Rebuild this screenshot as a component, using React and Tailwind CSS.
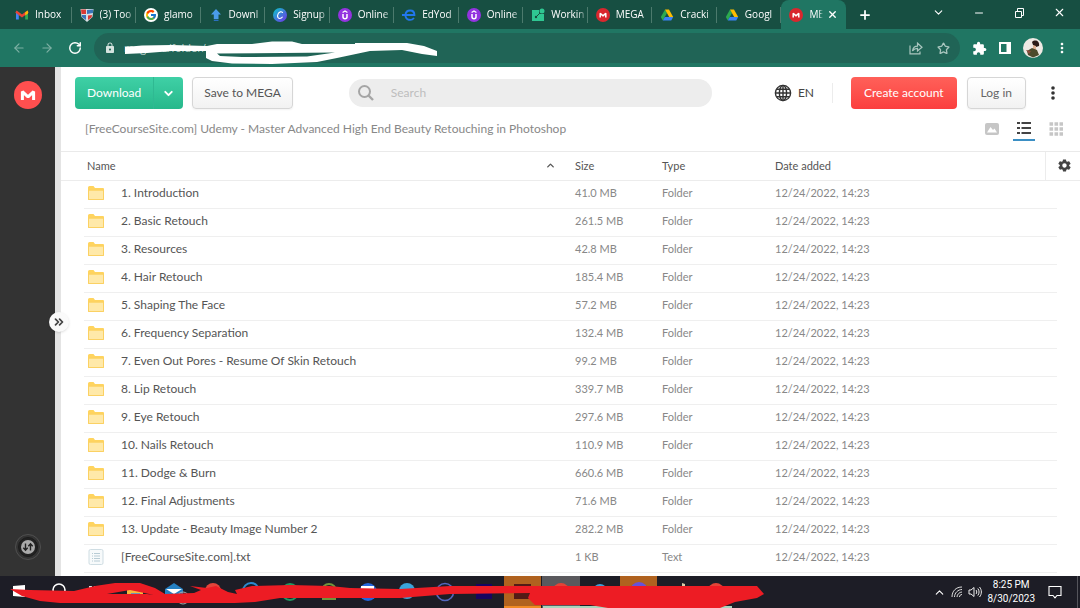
import { FcGoogle } from "react-icons/fc";
import { IoMdSettings } from "react-icons/io";
import { MdExtension, MdLock, MdMoreVert } from "react-icons/md";
import { ArrowLeft, ArrowRight, ChevronDown, ChevronUp, ChevronsRight, Minus, Plus, RotateCw, Star, X } from "lucide-react";

const tabs = [
    { title: "Inbox", icon: "gmail" },
    { title: "(3) Too", icon: "shield" },
    { title: "glamo", icon: "google" },
    { title: "Downl", icon: "arrow" },
    { title: "Signup", icon: "canva" },
    { title: "Online", icon: "udemy" },
    { title: "EdYod", icon: "edyoda" },
    { title: "Online", icon: "udemy" },
    { title: "Workin", icon: "sheet" },
    { title: "MEGA", icon: "mega" },
    { title: "Cracki", icon: "drive" },
    { title: "Googl", icon: "drive" },
    { title: "ME", icon: "mega", active: true },
];

const files = [
    ["1. Introduction", "41.0 MB"],
    ["2. Basic Retouch", "261.5 MB"],
    ["3. Resources", "42.8 MB"],
    ["4. Hair Retouch", "185.4 MB"],
    ["5. Shaping The Face", "57.2 MB"],
    ["6. Frequency Separation", "132.4 MB"],
    ["7. Even Out Pores - Resume Of Skin Retouch", "99.2 MB"],
    ["8. Lip Retouch", "339.7 MB"],
    ["9. Eye Retouch", "297.6 MB"],
    ["10. Nails Retouch", "110.9 MB"],
    ["11. Dodge & Burn", "660.6 MB"],
    ["12. Final Adjustments", "71.6 MB"],
    ["13. Update - Beauty Image Number 2", "282.2 MB"],
    ["[FreeCourseSite.com].txt", "1 KB", "Text"],
];

function MegaLogo({ className, fill = "#d9272e" }) {
    return (
        <svg viewBox="0 0 28 28" className={className}>
            <circle cx="14" cy="14" r="14" fill={fill} />
            <path d="M8.4 19V10.6L14 15.8L19.6 10.6V19" fill="none" stroke="#fff" strokeWidth="3" strokeLinejoin="bevel" />
        </svg>
    );
}

function DriveIcon() {
    return (
        <svg viewBox="0 0 14 14" className="size-3.5">
            <path d="M5 1.5L0.8 9L2.8 12.5L7 5Z" fill="#2da94f" />
            <path d="M5 1.5H9L13.2 9H9.2Z" fill="#fdbd00" />
            <path d="M4.8 9H13.2L11.2 12.5H2.8Z" fill="#3b82f6" />
        </svg>
    );
}

function Favicon({ name }) {
    if (name === "gmail") {
        return (
            <svg viewBox="0 0 14 14" className="size-3.5">
                <path d="M1 3V11.5H3.8V6Z" fill="#4285f4" />
                <path d="M13 3V11.5H10.2V6Z" fill="#34a853" />
                <path d="M1 3.5L7 8L13 3.5" fill="none" stroke="#ea4335" strokeWidth="2.4" />
                <path d="M10.2 4.2L13 2.4V5.6L10.2 7.4Z" fill="#fbbc04" />
            </svg>
        );
    }
    if (name === "shield") {
        return (
            <svg viewBox="0 0 14 14" className="size-3.5">
                <path d="M0.5 1H13.5L12.5 9L7 14L1.5 9Z" fill="#d8dde3" />
                <path d="M1 1.5H6V6H1.5Z" fill="#d83a34" />
                <path d="M7 2L13 1.5V5L7 6Z" fill="#3a76b9" />
                <path d="M2 7L6 7V12L2 9Z" fill="#3a76b9" />
                <path d="M8 7.5L12 7L11.5 9.5L8 12Z" fill="#d83a34" />
            </svg>
        );
    }
    if (name === "google") {
        return (
            <span className="flex size-3.5 items-center justify-center rounded-full bg-white">
                <FcGoogle size={12} />
            </span>
        );
    }
    if (name === "arrow") {
        return (
            <svg viewBox="0 0 14 14" className="size-3.5">
                <path d="M7 1L12 6.5H9.5V11H4.8V6.5H2Z" fill="#4a9bea" />
                <path d="M4.8 11.6H9.5V13H4.8Z" fill="#2b6fc0" />
            </svg>
        );
    }
    if (name === "canva") {
        return (
            <svg viewBox="0 0 14 14" className="size-3.5">
                <defs>
                    <linearGradient id="canva" x1="0" y1="0" x2="1" y2="1">
                        <stop offset="0.1" stopColor="#12bccb" />
                        <stop offset="0.9" stopColor="#6a3de8" />
                    </linearGradient>
                </defs>
                <circle cx="7" cy="7" r="7" fill="url(#canva)" />
                <path d="M9.6 5C9.4 2.8 5.2 3.4 4.6 7.4C4.2 11.4 8 11 9.6 8.8" fill="none" stroke="#fff" strokeWidth="1.1" />
            </svg>
        );
    }
    if (name === "udemy") {
        return (
            <svg viewBox="0 0 14 14" className="size-3.5">
                <circle cx="7" cy="7" r="7" fill="#9333e0" />
                <path d="M4.6 4.6L7 3L9.4 4.6" fill="none" stroke="#fff" strokeWidth="1.2" />
                <path d="M5 6V9C5 11.3 9 11.3 9 9V6" fill="none" stroke="#fff" strokeWidth="1.5" />
            </svg>
        );
    }
    if (name === "edyoda") {
        return (
            <svg viewBox="0 0 14 14" className="size-3.5">
                <path d="M0 7H12.4C12.4 1 4 1 3.4 7C3.6 12.8 9.6 12.8 12 10" fill="none" stroke="#2277ee" strokeWidth="1.9" />
            </svg>
        );
    }
    if (name === "sheet") {
        return (
            <svg viewBox="0 0 14 14" className="size-3.5">
                <path d="M1 2H8V6H13V13H1Z" fill="#2fc792" />
                <path d="M4 10L12 2" stroke="#17503f" strokeWidth="1" />
                <circle cx="11" cy="3" r="2.5" fill="#2fc792" />
                <circle cx="5" cy="9" r="1.2" fill="#17503f" />
            </svg>
        );
    }
    if (name === "mega") return <MegaLogo className="size-3.5" />;
    return <DriveIcon />;
}

function Tab({ tab }) {
    return (
        <div
            className={
                tab.active
                    ? "flex h-full min-w-0 flex-1 items-center rounded-t-lg bg-[#207663] pl-2"
                    : "relative flex h-full min-w-0 flex-1 items-center pl-2 after:absolute after:right-0 after:h-4 after:w-px after:bg-[#4c7a6d]"
            }
        >
            <span className="shrink-0"><Favicon name={tab.icon} /></span>
            <span className="ml-1.5 min-w-0 flex-1 mask-r-from-70% whitespace-nowrap">{tab.title}</span>
            {tab.active && <button aria-label="Close tab" className="mr-2 ml-1"><X size={11} strokeWidth={3} /></button>}
        </div>
    );
}

function BrowserBar() {
    return (
        <header className="text-white">
            <div className="flex h-[29px] items-center bg-[#174f42] pl-[7px] font-['Open_Sans',sans-serif] text-[10px]">
                <div className="flex h-full min-w-0 flex-1">
                    {tabs.map((tab, i) => <Tab key={i} tab={tab} />)}
                </div>
                <div className="flex w-[234px] items-center justify-between pr-3.5 pl-3">
                    <button aria-label="New tab"><Plus size={14} strokeWidth={3} /></button>
                    <div className="flex items-center gap-[28px] pb-1">
                        <button aria-label="Search tabs"><ChevronDown size={13} strokeWidth={2} /></button>
                        <button aria-label="Minimize"><Minus size={12} strokeWidth={2} /></button>
                        <button aria-label="Restore">
                            <svg viewBox="0 0 12 12" className="size-3" fill="none" stroke="currentColor">
                                <path d="M2.5 4.5H8.5V10.5H2.5ZM4.5 4V1.5H10.5V8.5H9" />
                            </svg>
                        </button>
                        <button aria-label="Close"><X size={13} strokeWidth={2} /></button>
                    </div>
                </div>
            </div>
            <div className="flex h-[38px] items-center bg-[#207663] pr-2.5 pl-3">
                <div className="flex items-center gap-3.5">
                    <button aria-label="Back" className="text-[#7db0a4]"><ArrowLeft size={14} /></button>
                    <button aria-label="Forward" className="text-[#7db0a4]"><ArrowRight size={14} /></button>
                    <button aria-label="Reload"><RotateCw size={14} strokeWidth={2.5} /></button>
                </div>
                <div className="relative ml-3 flex h-[30px] flex-1 items-center rounded-full bg-[#206456] px-2.5">
                    <MdLock size={12} className="text-[#d5e3df]" />
                    <input
                        aria-label="Address"
                        className="ml-2 min-w-0 flex-1 bg-transparent font-['Open_Sans',sans-serif] text-[11px] text-[#b9d0ca] outline-none"
                        defaultValue="mega.nz/folder/"
                    />
                    <div className="flex items-center gap-3.5 text-[#a9c6bf]">
                        <button aria-label="Share">
                            <svg viewBox="0 0 14 14" className="size-3.5" fill="none" stroke="currentColor" strokeWidth="1.2">
                                <path d="M1 4.5V12.8H11V10.5M3.5 10C4 6.5 6 5.2 8.5 5.2V2.2L13 6.2L8.5 10V7.4C6.5 7.4 5 8 3.5 10Z" />
                            </svg>
                        </button>
                        <button aria-label="Bookmark"><Star size={13} strokeWidth={2.4} /></button>
                    </div>
                    <svg viewBox="0 0 320 28" className="pointer-events-none absolute top-1 left-7 h-7 w-80" fill="#fff">
                        <path d="M3 10L20 8.5L50 8L85 9L95 7L130 7L150 4.5L170 4.5L180 7L233 7V6L285 6L302 9L315 14V19L300 17L280 13L248 14L215 21L195 25L150 27L110 26.5L90 24L84 21V14L50 14L25 16L3 17ZM95 16.5L98 19L120 20L185 19.5L213 15.5Z" fillRule="evenodd" />
                    </svg>
                </div>
                <div className="ml-3 flex items-center gap-[11px]">
                    <button aria-label="Extensions"><MdExtension size={15} /></button>
                    <button aria-label="Side panel">
                        <svg viewBox="0 0 14 14" className="size-3.5"><path d="M1 1H13V13H1ZM3 3V11H8.5V3Z" fill="#fff" fillRule="evenodd" /></svg>
                    </button>
                    <button aria-label="Profile">
                        <svg viewBox="0 0 20 20" className="size-5">
                            <circle cx="10" cy="10" r="10" fill="#efe9e4" />
                            <path d="M9 4C12 1 17 3 16 8L13 9L10 7Z" fill="#2b1a17" />
                            <path d="M10 7L13 8L13 12L10 11Z" fill="#e2b394" />
                            <path d="M4 13L9 10L14 12L16 17L10 19.5L5 17Z" fill="#4c4a2c" />
                            <path d="M3 12L8 13L6 16Z" fill="#8d4b3c" />
                        </svg>
                    </button>
                    <button aria-label="Menu"><MdMoreVert size={16} /></button>
                </div>
            </div>
        </header>
    );
}

function FolderIcon() {
    return (
        <svg viewBox="0 0 18 16" className="h-4 w-[18px]">
            <path d="M1 2.5Q1 1 2.5 1H6.5L8 3H16Q17 3 17 4V14Q17 15 16 15H2Q1 15 1 14Z" fill="#ffd45e" />
            <path d="M2 5.5H16V14H2Z" fill="#ffe9a9" />
            <path d="M1.5 5H16.5V14.5H1.5Z" fill="none" stroke="#fbd163" />
        </svg>
    );
}

function TextIcon() {
    return (
        <svg viewBox="0 0 18 18" className="size-[18px]" fill="none" stroke="#cfdde3">
            <rect x="2" y="1.5" width="14" height="15" rx="1.5" fill="#f7fafb" />
            <path d="M5 5.5H6M7 5.5H13M5 8H6M7 8H13M5 10.5H6M7 10.5H13M5 13H6M7 13H13" stroke="#b8ccd5" />
        </svg>
    );
}

function Toolbar() {
    return (
        <div className="flex items-center pt-[10px] pr-[25px] pl-[14px] text-[12px]">
            <div className="flex h-8 items-center rounded bg-linear-to-b from-[#3fd0a6] to-[#26b88b] text-white">
                <button className="h-full px-3 pb-px">Download</button>
                <button aria-label="Download options" className="h-full border-l border-[#2fb992] px-2"><ChevronDown size={13} strokeWidth={3.5} /></button>
            </div>
            <button className="ml-[9px] h-8 rounded border border-[#d6d6d6] bg-linear-to-b from-white to-[#f2f2f2] px-[11px] pb-px text-[#555] shadow-xs">Save to MEGA</button>
            <label className="ml-14 flex h-7 max-w-[363px] flex-1 items-center rounded-full bg-[#ededed] px-2">
                <svg viewBox="0 0 18 18" className="size-[18px]" fill="none" stroke="#a5a5a5" strokeWidth="2">
                    <circle cx="7.5" cy="7.5" r="5.5" />
                    <path d="M11.5 11.5L16 16" strokeWidth="2.4" />
                </svg>
                <input aria-label="Search" placeholder="Search" className="ml-4 min-w-0 flex-1 outline-none placeholder:text-[#bdbdbd]" />
            </label>
            <div className="ml-auto flex items-center">
                <button className="flex items-center gap-1.5 text-[#444]">
                    <svg viewBox="0 0 18 18" className="size-[18px]" fill="none" stroke="#333" strokeWidth="1.4">
                        <circle cx="9" cy="9" r="7.6" />
                        <ellipse cx="9" cy="9" rx="3.6" ry="7.6" />
                        <path d="M9 1.4V16.6M1.4 9H16.6M2.5 5.3H15.5M2.5 12.7H15.5" />
                    </svg>
                    EN
                </button>
                <span className="mx-[18px] h-5 w-px bg-[#ececec]" />
                <button className="h-8 rounded bg-linear-to-b from-[#ff6059] to-[#fb3e3e] px-[13px] pb-px text-white">Create account</button>
                <button className="ml-2.5 h-8 rounded border border-[#d6d6d6] bg-linear-to-b from-white to-[#f2f2f2] px-[13px] pb-px text-[#666] shadow-xs">Log in</button>
                <button aria-label="More" className="ml-[25px]">
                    <svg viewBox="0 0 4 14" className="h-3.5 w-1" fill="#333">
                        <circle cx="2" cy="2" r="1.8" />
                        <circle cx="2" cy="7" r="1.8" />
                        <circle cx="2" cy="12" r="1.8" />
                    </svg>
                </button>
            </div>
        </div>
    );
}

function Breadcrumb() {
    return (
        <div className="flex h-[43px] items-start justify-between border-b border-[#eaeaea] pt-2 pr-[13px] pl-6 text-[#888]">
            <h1 className="pt-0.5 text-[12px] leading-5">[FreeCourseSite.com] Udemy - Master Advanced High End Beauty Retouching in Photoshop</h1>
            <div className="flex gap-2.5">
                <button aria-label="Gallery view" className="flex h-6 w-[22px] items-center justify-center">
                    <svg viewBox="0 0 14 12" className="h-3 w-3.5">
                        <rect width="14" height="12" rx="2" fill="#c6c6c6" />
                        <path d="M2 9.5L5.5 4L8 7L9.5 5.5L12 9.5Z" fill="#fff" />
                    </svg>
                </button>
                <button aria-label="List view" className="flex h-6 w-[22px] items-center justify-center border-b-2 border-[#3b8fc4]">
                    <svg viewBox="0 0 14 12" className="h-3 w-3.5" stroke="#444" strokeWidth="2">
                        <path d="M0 1H3M4.5 1H14M0 6H3M4.5 6H14M0 11H3M4.5 11H14" />
                    </svg>
                </button>
                <button aria-label="Grid view" className="flex h-6 w-[22px] items-center justify-center">
                    <svg viewBox="0 0 14 14" className="size-3.5" stroke="#c6c6c6" strokeWidth="3.4" strokeDasharray="3.6 1.4">
                        <path d="M0.5 2H14M0.5 7H14M0.5 12H14" />
                    </svg>
                </button>
            </div>
        </div>
    );
}

function FileTable() {
    return (
        <table className="w-full table-fixed border-collapse text-left text-[11px] text-[#888]">
            <thead>
                <tr className="h-7 border-b border-[#ececec] text-[#555]">
                    <th className="w-[23px]" />
                    <th className="pl-[3px] font-normal">
                        <span className="flex items-center justify-between pr-[19px]">
                            Name
                            <ChevronUp size={11} strokeWidth={3} />
                        </span>
                    </th>
                    <th className="w-[87px] font-normal">Size</th>
                    <th className="w-[113px] font-normal">Type</th>
                    <th className="w-[270px] font-normal">Date added</th>
                    <th className="w-3 border-l border-[#ececec]" />
                    <th className="w-[23px]">
                        <button aria-label="Column settings" className="block"><IoMdSettings size={15} color="#444" /></button>
                    </th>
                </tr>
            </thead>
            <tbody>
                {files.map(([name, size, type = "Folder"]) => (
                    <tr key={name} className="h-7">
                        <td />
                        <td className="border-b border-[#efefef] pb-0.5 pl-[3px] text-[12px] text-[#555]">
                            <span className="flex items-center gap-4">
                                {type === "Folder" ? <FolderIcon /> : <TextIcon />}
                                {name}
                            </span>
                        </td>
                        <td className="border-b border-[#efefef] pb-0.5">{size}</td>
                        <td className="border-b border-[#efefef] pb-0.5">{type}</td>
                        <td className="border-b border-[#efefef] pb-0.5">12/24/2022, 14:23</td>
                        <td className="border-b border-[#efefef]" />
                        <td />
                    </tr>
                ))}
            </tbody>
        </table>
    );
}

function Sidebar() {
    return (
        <aside className="relative flex w-[61px] shrink-0 flex-col items-center justify-between border-r-[6px] border-[#e4e4e4] bg-[#333] pt-[14px] pb-4">
            <a href="#home" aria-label="MEGA"><MegaLogo className="size-7" fill="#ff4f4f" /></a>
            <button aria-label="Transfers">
                <svg viewBox="0 0 26 26" className="size-[26px]" fill="none">
                    <circle cx="13" cy="13" r="12.5" stroke="#505050" />
                    <circle cx="13" cy="13" r="9.5" fill="#222" stroke="#1c1c1c" />
                    <circle cx="13" cy="13" r="7" fill="#aaa" />
                    <path d="M10.5 9.5V16M8.3 13.8L10.5 16.2L12.7 13.8M15.5 16.5V10M13.3 12.2L15.5 9.8L17.7 12.2" stroke="#222" strokeWidth="1.4" />
                </svg>
            </button>
            <button aria-label="Expand sidebar" className="absolute top-1/2 -right-3.5 flex size-5 -translate-y-1/2 items-center justify-center rounded-full bg-[#fafafa] text-[#444] shadow">
                <ChevronsRight size={14} strokeWidth={3} />
            </button>
        </aside>
    );
}

function Taskbar() {
    return (
        <footer className="relative flex h-8 items-center justify-end bg-[#1d1d26] font-['Roboto',sans-serif] text-[10px] text-white">
            <svg viewBox="0 0 780 32" className="absolute top-0 left-0 h-8 w-[780px]">
                <path d="M504 0H541V32H504ZM620 0H657V32H620Z" fill="#b0621f" />
                <path d="M542 0H580V32H542Z" fill="#5a595d" />
                <path d="M504 30H541V32H504Z" fill="#f08a24" />
                <path d="M543 30H732V32H543Z" fill="#a8d5bd" />
                <path d="M13 10L25 9V21L13 20Z" fill="#fff" />
                <circle cx="59" cy="14" r="6" fill="none" stroke="#fff" strokeWidth="1.6" />
                <path d="M89 11H92M94 11H97" stroke="#ddd" strokeWidth="2" />
                <path d="M127 14H143V20H127Z" fill="#f7b83c" />
                <path d="M131 17H140V20H131Z" fill="#6b93b8" />
                <path d="M165 13L174 7L183 13V19H165Z" fill="#2581c4" />
                <path d="M166 13H182L174 18Z" fill="#fff" />
                <circle cx="183" cy="22" r="6" fill="none" stroke="#aaa" />
                <circle cx="213" cy="15" r="8" fill="#e4443a" />
                <path d="M215 12L221 13L219 19Z" fill="#fbc02d" />
                <circle cx="251" cy="15" r="8" fill="none" stroke="#2c8ad0" strokeWidth="2" />
                <circle cx="290" cy="16" r="8" fill="none" stroke="#209862" strokeWidth="2" />
                <circle cx="329" cy="15" r="7" fill="none" stroke="#71953c" strokeWidth="2" />
                <path d="M322 19H336V24H322Z" fill="#71953c" />
                <circle cx="368" cy="16" r="9" fill="#2466dd" />
                <path d="M361 10H374V13H361Z" fill="#fff" />
                <circle cx="407" cy="15" r="8" fill="#39a5dc" />
                <circle cx="445" cy="16" r="8.5" fill="none" stroke="#5467bd" strokeWidth="1.6" />
                <path d="M476 8H492V23H476Z" fill="#16055f" />
                <path d="M514 8H531V23H514Z" fill="#521b16" />
                <circle cx="561" cy="15" r="8" fill="#e44337" />
                <circle cx="600" cy="15" r="7" fill="#3f9fd8" />
                <circle cx="639" cy="15" r="9" fill="#6652d9" />
                <path d="M682 7L685 8V14H682Z" fill="#d8cda9" />
                <circle cx="716" cy="15" r="8" fill="#e44337" />
                <path
                    d="M10 13L30 14L74 15L95 10L115 7H140L155 12L165 18L194 17L201 14L190 10L207 12L216 10L228 16L237 18L235 14L252 10L290 9L330 10L350 12L400 13L450 10H757L764 18L757 22L735 26L720 32H608L590 29H535L528 22L530 17L450 18L400 22L330 22L280 22L255 26L235 27H60L40 25L22 20ZM107 18H147L154 19L130 14Z"
                    fill="#ed1c24"
                    fillRule="evenodd"
                />
            </svg>
            <div className="flex h-full items-center gap-[5px] pr-0.5">
                <button aria-label="Show hidden icons"><ChevronUp size={13} strokeWidth={2} /></button>
                <svg viewBox="0 0 12 12" className="size-3" fill="none" stroke="#ddd">
                    <path d="M1 11C1 5 5 1 11 1M3.5 11C3.5 7 7 3.5 11 3.5M6 11C6 8.5 8.5 6 11 6M8.5 11C8.5 9.5 9.5 8.5 11 8.5" />
                </svg>
                <svg viewBox="0 0 14 12" className="h-3 w-3.5" fill="none" stroke="#eee">
                    <path d="M1 4H3L6 1.5V10.5L3 8H1ZM8 4C9 5 9 7 8 8M9.8 2.5C11.5 4.5 11.5 7.5 9.8 9.5M11.5 1C14 4 14 8 11.5 11" />
                </svg>
                <div className="text-center leading-[14px]">
                    <div>8:25 PM</div>
                    <div>8/30/2023</div>
                </div>
                <button aria-label="Notifications" className="ml-2">
                    <svg viewBox="0 0 14 14" className="size-3.5" fill="none" stroke="#fff" strokeWidth="1.1">
                        <path d="M1 1.5H13V10.5H9L7 12.8L5 10.5H1Z" />
                    </svg>
                </button>
                <span className="ml-2.5 h-full w-px bg-[#55555c]" />
            </div>
        </footer>
    );
}

export default function App() {
    return (
        <div className="flex min-h-screen flex-col bg-white font-['Lato',sans-serif]">
            <BrowserBar />
            <div className="flex flex-1">
                <Sidebar />
                <main className="min-w-0 flex-1">
                    <Toolbar />
                    <Breadcrumb />
                    <FileTable />
                </main>
            </div>
            <Taskbar />
        </div>
    );
}
